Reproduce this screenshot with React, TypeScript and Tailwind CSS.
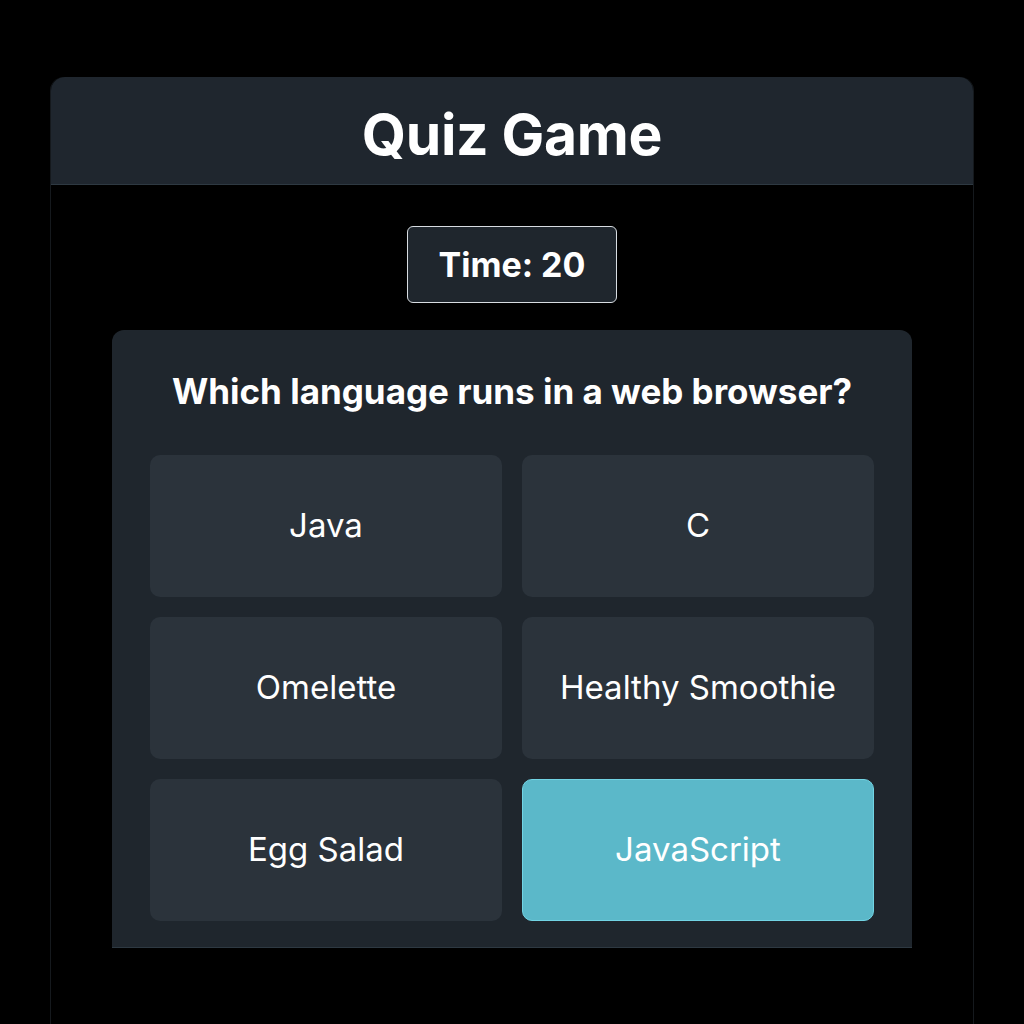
import React from 'react';

const options = [
  { label: 'Java' },
  { label: 'C' },
  { label: 'Omelette' },
  { label: 'Healthy Smoothie' },
  { label: 'Egg Salad' },
  { label: 'JavaScript', selected: true },
];

export default function App() {
  return (
    <div
      className="min-h-screen bg-black pt-[77px] px-[50px]"
      style={{ fontFamily: 'Inter, "Noto Sans", sans-serif' }}
    >
      <div className="h-[947px] rounded-t-[14px] border-x border-[#15191d] flex flex-col">
        {/* header */}
        <div className="h-[108px] bg-[#1f262e] rounded-t-[14px] border-b border-[#2e3942] flex items-center justify-center pt-[8px]">
          <h1 className="text-[57px] font-bold text-white tracking-[-0.3px]">Quiz Game</h1>
        </div>

        {/* timer */}
        <div className="flex justify-center mt-[41px]">
          <div className="w-[210px] h-[77px] bg-[#1f262d] border border-[#d8dde2] rounded-[6px] flex items-center justify-center">
            <span className="text-[34px] font-bold text-white">Time: 20</span>
          </div>
        </div>

        {/* question card */}
        <div className="mx-[61px] mt-[27px] bg-[#1f262d] rounded-t-[12px] border-b border-[#2e3942] px-[38px] pb-[26px]">
          <p className="text-center text-[35px] font-bold text-white pt-[37px] pb-[40px] leading-[48px]">
            Which language runs in a web browser?
          </p>
          <div className="grid grid-cols-2 gap-x-[20px] gap-y-[20px]">
            {options.map((o) => (
              <button
                key={o.label}
                className={
                  o.selected
                    ? 'h-[142px] rounded-[10px] bg-[#5bb8c9] border border-[#72d4e4] text-white text-[33px]'
                    : 'h-[142px] rounded-[10px] bg-[#2b333b] text-white text-[33px]'
                }
              >
                {o.label}
              </button>
            ))}
          </div>
        </div>
      </div>
    </div>
  );
}
